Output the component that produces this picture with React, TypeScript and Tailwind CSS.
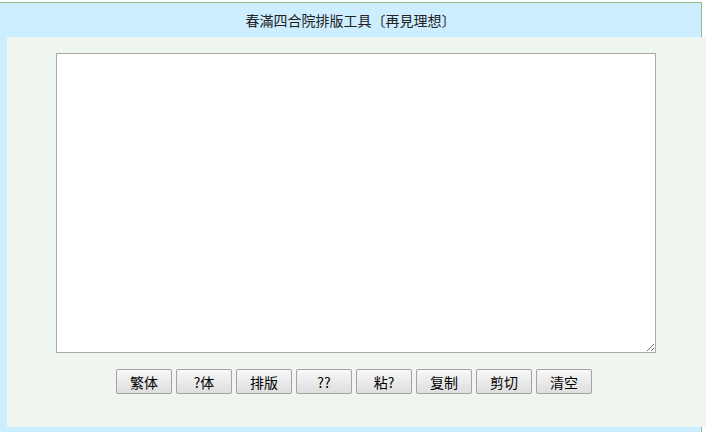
import { useState } from "react";

const buttons = ["繁体", "?体", "排版", "??", "粘?", "复制", "剪切", "清空"];

export default function App() {
    const [text, setText] = useState("");

    return (
        <div
            className="w-[706px] h-[432px] overflow-hidden bg-white"
            style={{ fontFamily: '"Noto Sans CJK TC", "Noto Sans CJK SC", sans-serif' }}
        >
            <div className="mt-[2px] w-[702px] border-t border-r border-[#8dbf8d] bg-[#cdeeff] pb-[10px]">
                <div className="h-[34px] flex items-center justify-center text-[14px] text-[#222]">
                    春滿四合院排版工具〔再見理想〕
                </div>
                <div className="ml-[7px] w-[699px] h-[390px] bg-[#eff5ef] pt-[16px]">
                    <textarea
                        value={text}
                        onChange={(e) => setText(e.target.value)}
                        className="block ml-[49px] w-[600px] h-[300px] bg-white border border-[#a9a9a9] outline-none p-[2px] text-[13px]"
                    />
                    <div className="mt-[16px] ml-[109px] flex gap-[4px]">
                        {buttons.map((label) => (
                            <button
                                key={label}
                                className="w-[56px] h-[25px] rounded-[2px] border border-[#a3a3a3] bg-gradient-to-b from-[#f7f7f7] to-[#dedede] text-[14px] leading-none text-black"
                                style={{ fontFamily: '"Noto Sans CJK SC", "Liberation Sans", sans-serif' }}
                            >
                                {label}
                            </button>
                        ))}
                    </div>
                </div>
            </div>
        </div>
    );
}
